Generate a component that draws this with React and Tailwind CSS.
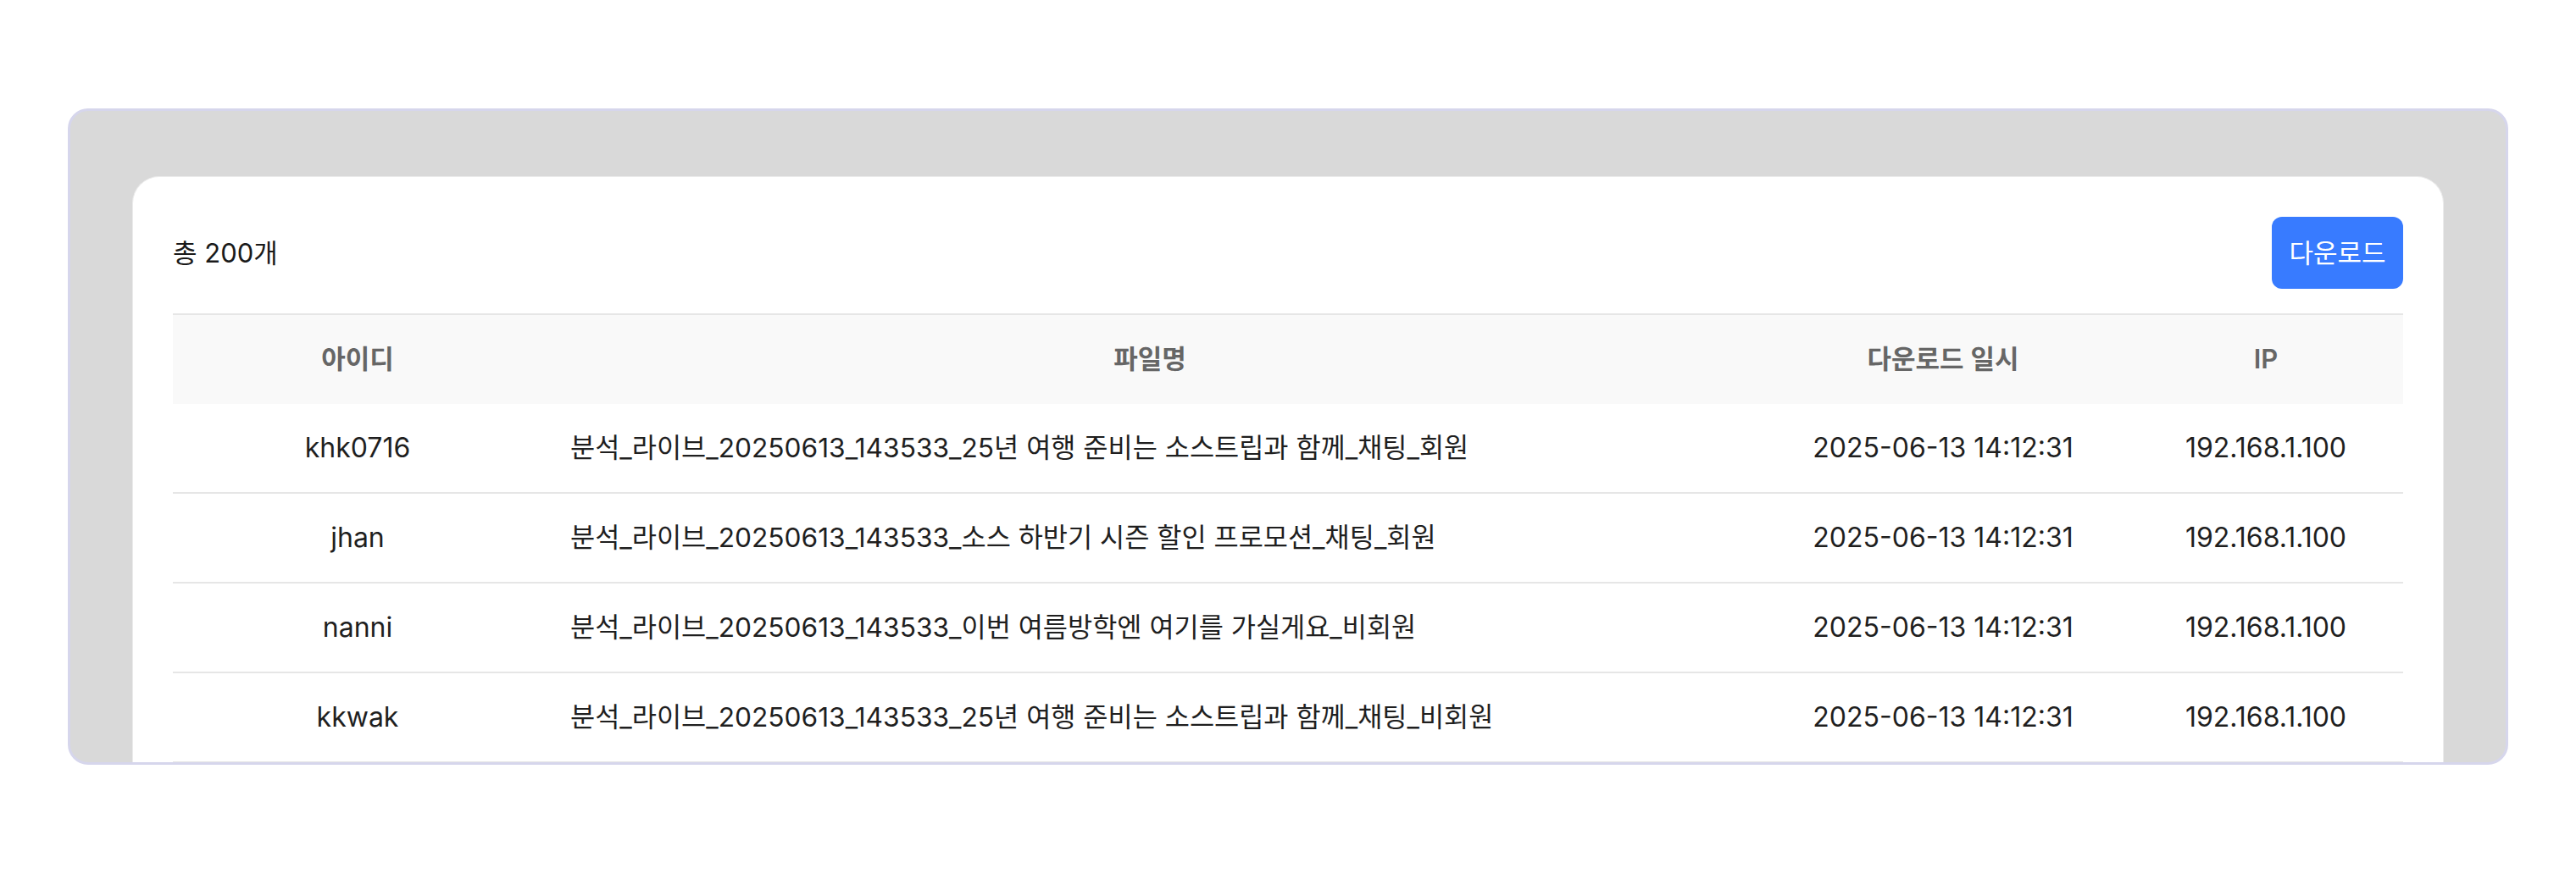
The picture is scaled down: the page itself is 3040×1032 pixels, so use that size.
import React from "react";

const rows = [
  { id: "khk0716", file: "분석_라이브_20250613_143533_25년 여행 준비는 소스트립과 함께_채팅_회원" },
  { id: "jhan", file: "분석_라이브_20250613_143533_소스 하반기 시즌 할인 프로모션_채팅_회원" },
  { id: "nanni", file: "분석_라이브_20250613_143533_이번 여름방학엔 여기를 가실게요_비회원" },
  { id: "kkwak", file: "분석_라이브_20250613_143533_25년 여행 준비는 소스트립과 함께_채팅_비회원" },
];

export default function App() {
  return (
    <div
      className="w-[3040px] h-[1032px] bg-white pt-[128px] px-[80px]"
      style={{ fontFamily: "Inter, 'Noto Sans CJK KR', 'Noto Sans', sans-serif" }}
    >
      <div className="h-[775px] rounded-[24px] border-[3px] border-[#d6d6ec] bg-[#d9d9d9] pt-[77px] px-[73px] overflow-hidden">
        <div className="h-full rounded-t-[32px] bg-white border border-[#ebebeb] border-b-0 p-[47px] overflow-hidden">
          <div className="flex items-center justify-between h-[85px]">
            <span className="text-[31px] text-[#1a1a1a] leading-none">총 200개</span>
            <button className="w-[155px] h-[85px] rounded-[12px] bg-[#387bff] text-white text-[31px] leading-none">
              다운로드
            </button>
          </div>
          <div className="mt-[29px] border-t-2 border-[#e6e6e6]">
            <div className="grid grid-cols-[436px_1434px_438px_1fr] h-[105px] items-center bg-[#f9f9f9] text-[31px] font-semibold text-[#666666]">
              <div className="text-center">아이디</div>
              <div className="text-center">파일명</div>
              <div className="text-center">다운로드 일시</div>
              <div className="text-center">IP</div>
            </div>
            {rows.map((r) => (
              <div
                key={r.id}
                className="grid grid-cols-[436px_1434px_438px_1fr] h-[106px] items-center border-b-2 border-[#e6e6e6] text-[32px] text-[#1f1f1f]"
              >
                <div className="text-center">{r.id}</div>
                <div className="pl-[33px] whitespace-nowrap text-[31.7px]">{r.file}</div>
                <div className="text-center">2025-06-13 14:12:31</div>
                <div className="text-center">192.168.1.100</div>
              </div>
            ))}
          </div>
        </div>
      </div>
    </div>
  );
}
